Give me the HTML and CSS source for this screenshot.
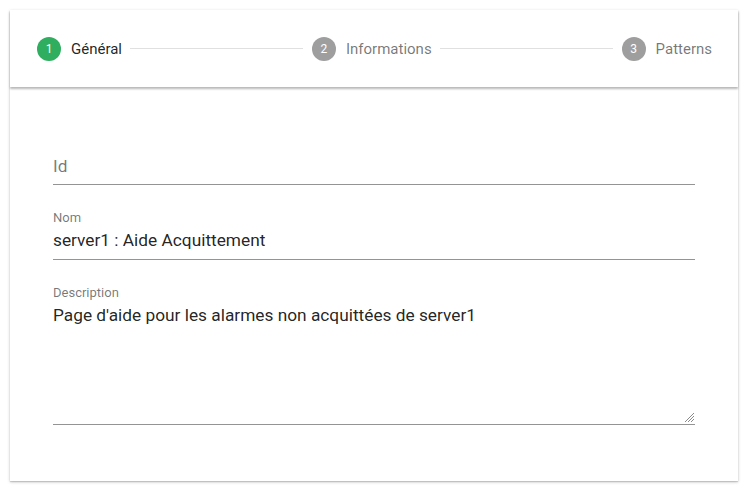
FILE: index.html
```html
<!DOCTYPE html>
<html lang="fr">
<head>
<meta charset="utf-8">
<title>Stepper</title>
<link rel="stylesheet" href="styles.css">
</head>
<body>
<div class="card">
  <div class="stepper-header">
    <div class="step active">
      <span class="step-icon">1</span>
      <span class="step-label">Général</span>
    </div>
    <div class="step-line"></div>
    <div class="step">
      <span class="step-icon">2</span>
      <span class="step-label">Informations</span>
    </div>
    <div class="step-line"></div>
    <div class="step">
      <span class="step-icon">3</span>
      <span class="step-label">Patterns</span>
    </div>
  </div>
  <div class="content">
    <div class="field empty">
      <div class="field-label"></div>
      <div class="field-value placeholder">Id</div>
    </div>
    <div class="field">
      <div class="field-label">Nom</div>
      <div class="field-value">server1 : Aide Acquittement</div>
    </div>
    <div class="field area">
      <div class="field-label">Description</div>
      <div class="field-value">Page d'aide pour les alarmes non acquittées de server1</div>
      <svg class="resize" width="12" height="12" viewBox="0 0 12 12">
        <path d="M11 2 L2 11 M11 5 L5 11 M11 8 L8 11" stroke="#8a8a8a" stroke-width="1" fill="none"/>
      </svg>
    </div>
  </div>
</div>
</body>
</html>
```
FILE: styles.css
```css
html, body {
  margin: 0;
  padding: 0;
  background: #ffffff;
}
body {
  padding: 10px;
  font-family: Roboto, "Noto Sans", sans-serif;
}
.card {
  width: 728px;
  height: 471px;
  background: #fff;
  box-shadow: 0 1px 3px rgba(0,0,0,0.22), 0 1px 1px rgba(0,0,0,0.12);
  box-sizing: border-box;
}
.stepper-header {
  height: 77px;
  display: flex;
  align-items: center;
  padding: 0 26px 0 27px;
  box-shadow: 0 2px 2px rgba(0,0,0,0.28);
  position: relative;
}
.step {
  display: flex;
  align-items: center;
  color: rgba(0,0,0,0.54);
  font-size: 15px;
}
.step-icon {
  width: 24px;
  height: 24px;
  border-radius: 50%;
  background: #9e9e9e;
  color: #fff;
  font-size: 12px;
  display: flex;
  align-items: center;
  justify-content: center;
  margin-right: 10px;
}
.step.active { color: rgba(0,0,0,0.87); }
.step.active .step-icon { background: #2fae60; }
.step-line {
  flex: 1;
  height: 1px;
  background: #e0e0e0;
  margin: 0 9px 0 8px;
}
.content {
  padding: 49px 43px 0 43px;
}
.field {
  position: relative;
  border-bottom: 1px solid #949494;
  color: rgba(0,0,0,0.87);
  margin-bottom: 25px;
}
.field-label {
  font-size: 13px;
  color: rgba(0,0,0,0.54);
  line-height: 16px;
  height: 16px;
  margin-bottom: 3px;
}
.field-value {
  font-size: 17.3px;
  line-height: 22px;
  padding-bottom: 8px;
}
.empty .field-value {
  padding-bottom: 7px;
}
.placeholder {
  color: rgba(0,0,0,0.54);
}
.area {
  height: 140px;
  box-sizing: border-box;
}
.resize {
  position: absolute;
  right: 0;
  bottom: 1px;
}
```
